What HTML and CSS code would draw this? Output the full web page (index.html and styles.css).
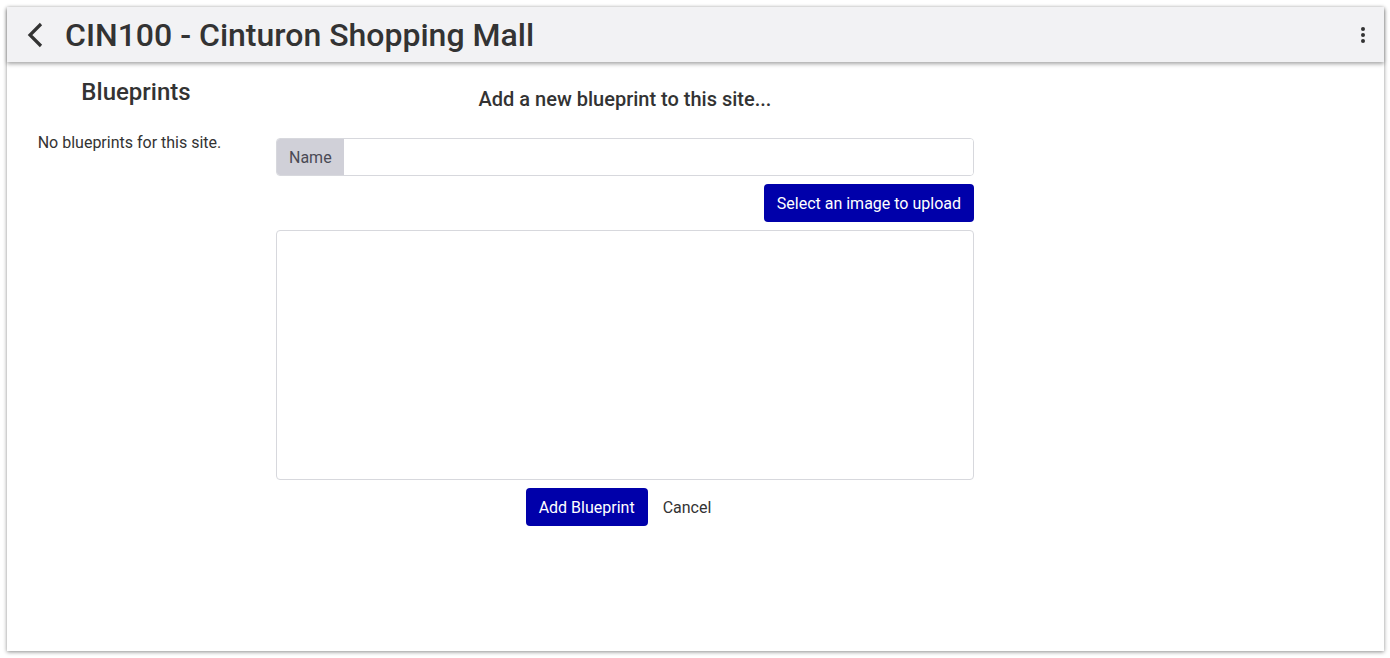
FILE: index.html
```html
<!DOCTYPE html>
<html lang="en">
<head>
    <meta charset="UTF-8">
    <meta name="viewport" content="width=device-width, initial-scale=1.0">
    <title>CIN100 - Blueprints</title>
    <link rel="stylesheet" href="styles.css">
</head>
<body>
    <div class="page">
        <!-- Header -->
        <header class="topbar">
            <a class="back" href="#" aria-label="Back">
                <svg width="20" height="26" viewBox="0 0 20 26">
                    <path d="M16 2 L5 13 L16 24" fill="none" stroke="#333" stroke-width="3.2"/>
                </svg>
            </a>
            <h1>CIN100 - Cinturon Shopping Mall</h1>
            <button class="menu" aria-label="Menu">
                <svg width="6" height="18" viewBox="0 0 6 18">
                    <circle cx="3" cy="3" r="2" fill="#333"/>
                    <circle cx="3" cy="9" r="2" fill="#333"/>
                    <circle cx="3" cy="15" r="2" fill="#333"/>
                </svg>
            </button>
        </header>

        <!-- Main Content -->
        <div class="content">
            <section class="blueprints">
                <h2>Blueprints</h2>
                <p>No blueprints for this site.</p>
            </section>

            <section class="new-blueprint">
                <h3>Add a new blueprint to this site...</h3>
                <div class="input-group">
                    <span class="input-label">Name</span>
                    <input type="text" id="name">
                </div>
                <div class="upload-row">
                    <button class="btn btn-primary">Select an image to upload</button>
                </div>
                <div class="preview"></div>
                <div class="actions">
                    <button class="btn btn-primary">Add Blueprint</button>
                    <button class="btn btn-link">Cancel</button>
                </div>
            </section>
        </div>
    </div>
</body>
</html>
```

FILE: styles.css
```css
:root {
    --text-color: #333;
    --primary-color: #0000aa;
    --border-color: #d7d8dd;
    --bar-color: #f2f2f4;
    --font-family: Roboto, 'Liberation Sans', sans-serif;
}

* {
    box-sizing: border-box;
}

body {
    margin: 0;
    padding: 7px 6px 7px 7px;
    background-color: #ffffff;
    font-family: var(--font-family);
    color: var(--text-color);
}

.page {
    height: 644px;
    background-color: white;
    box-shadow: 0 1px 4px rgba(0, 0, 0, 0.45);
}

.topbar {
    display: flex;
    align-items: center;
    height: 55px;
    padding: 0 14px 0 18px;
    background-color: var(--bar-color);
    box-shadow: 0 2px 4px rgba(0, 0, 0, 0.35);
    position: relative;
}

.back {
    display: flex;
    margin-right: 20px;
}

.topbar h1 {
    flex: 1;
    margin: 0;
    font-size: 32px;
    font-weight: 500;
}

.menu {
    display: flex;
    background: none;
    border: none;
    padding: 4px;
    cursor: pointer;
}

.content {
    display: grid;
    grid-template-columns: 258px 698px;
    column-gap: 11px;
    padding-top: 16px;
}

.blueprints {
    text-align: center;
}

.blueprints h2 {
    margin: 0;
    font-size: 24px;
    font-weight: 500;
    line-height: 28px;
}

.blueprints p {
    margin: 25px 0 0;
    padding-right: 13px;
    font-size: 16px;
    line-height: 24px;
}

.new-blueprint h3 {
    margin: 9px 0 0;
    text-align: center;
    font-size: 20px;
    font-weight: 500;
    line-height: 24px;
}

.input-group {
    display: flex;
    height: 38px;
    margin-top: 27px;
    border: 1px solid var(--border-color);
    border-radius: 4px;
    overflow: hidden;
}

.input-label {
    display: flex;
    align-items: center;
    padding: 0 12px;
    background-color: #d0d0d8;
    color: #4a4a55;
    font-size: 16px;
}

.input-group input {
    flex: 1;
    border: none;
    outline: none;
    padding: 0 12px;
    font-family: var(--font-family);
    font-size: 16px;
}

.upload-row {
    display: flex;
    justify-content: flex-end;
    margin-top: 8px;
}

.btn {
    height: 38px;
    padding: 0 12px;
    border: 1px solid transparent;
    border-radius: 4px;
    font-family: var(--font-family);
    font-size: 16px;
    cursor: pointer;
}

.btn-primary {
    background-color: var(--primary-color);
    color: white;
}

.btn-link {
    background: none;
    color: var(--text-color);
}

.preview {
    height: 250px;
    margin-top: 8px;
    border: 1px solid var(--border-color);
    border-radius: 4px;
}

.actions {
    display: flex;
    justify-content: center;
    gap: 2px;
    margin-top: 8px;
}
```
